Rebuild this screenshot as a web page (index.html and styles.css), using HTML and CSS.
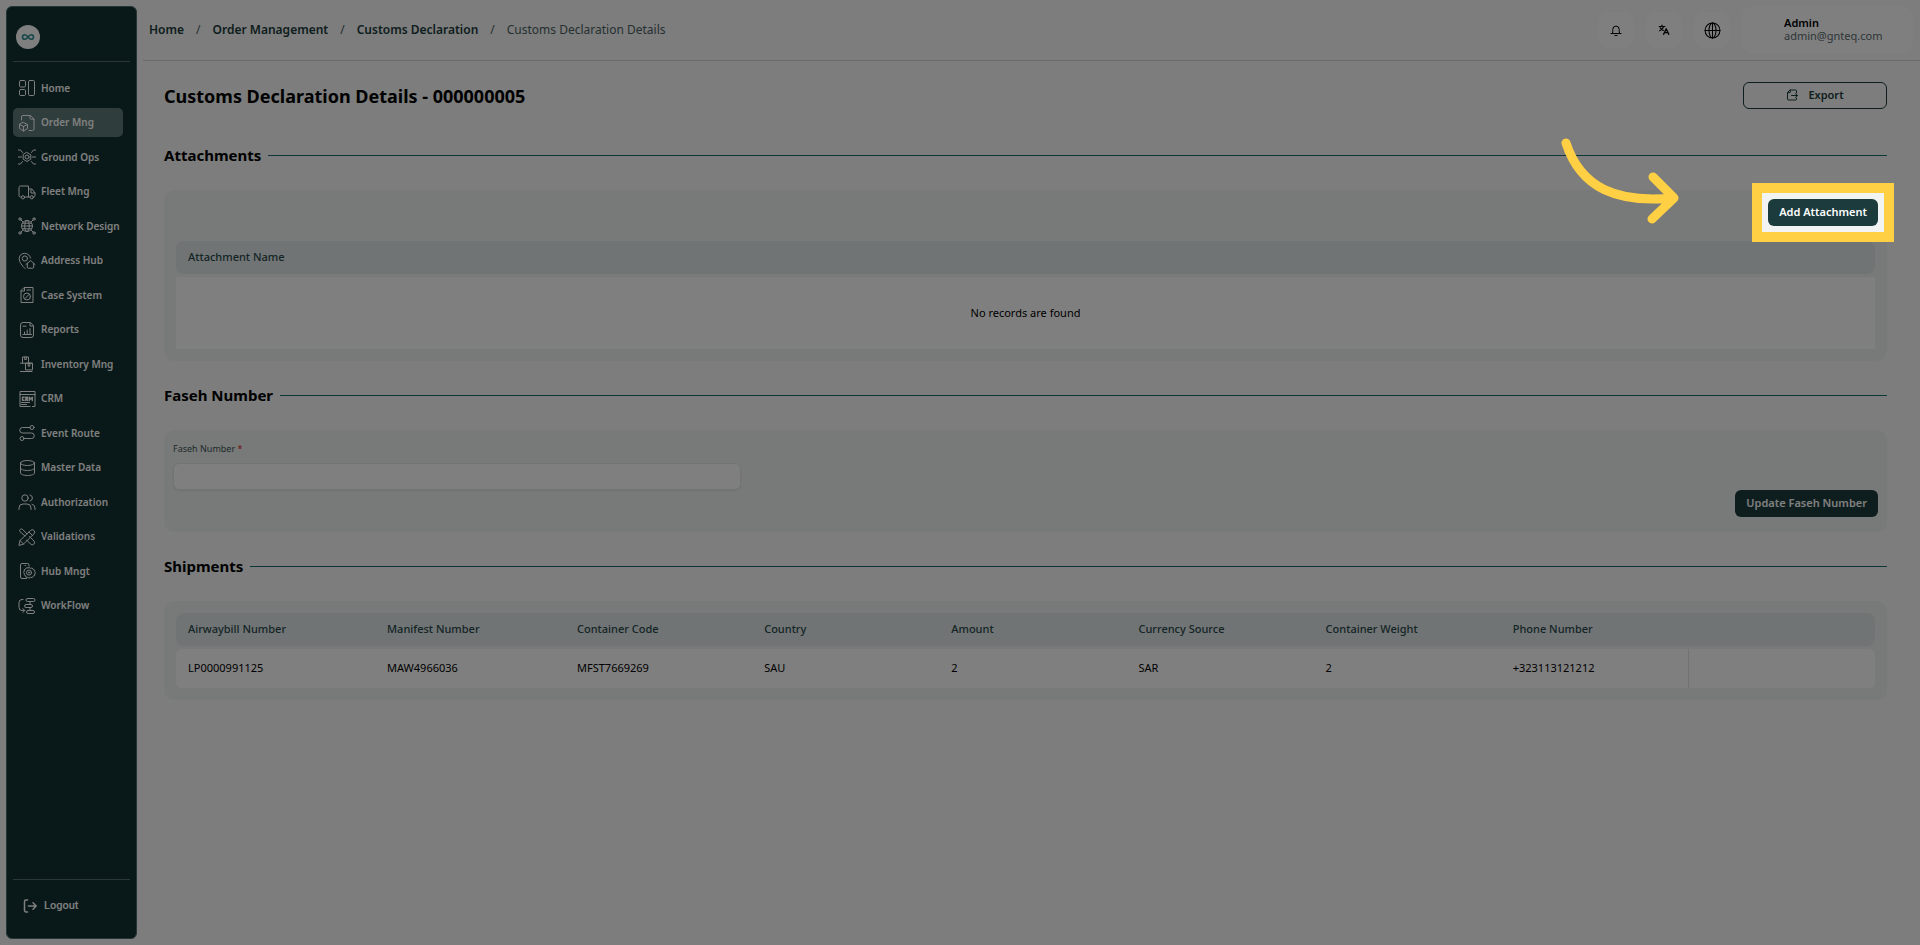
FILE: index.html
```html
<!DOCTYPE html>
<html lang="en">
<head>
    <meta charset="UTF-8">
    <meta name="viewport" content="width=device-width, initial-scale=1.0">
    <title>Customs Declaration Details</title>
    <link rel="stylesheet" href="styles.css">
</head>
<body>
    <aside class="sidebar">
        <div class="logo">
            <svg viewBox="0 0 24 24" aria-hidden="true">
                <path d="M12 12c-1.200-1.700-2-2.300-3.200-2.300a2.300 2.300 0 0 0 0 4.600c1.200 0 2-.6 3.200-2.300s2-2.300 3.200-2.300a2.300 2.300 0 0 1 0 4.600c-1.200 0-2-.6-3.200-2.300z"/>
            </svg>
        </div>

        <nav class="nav">
            <ul class="nav-list">
                <li><a class="nav-link" href="#">
                    <svg viewBox="0 0 18 18"><rect x="1.500" y="1.500" width="6" height="6.500" rx="1.200"/><rect x="1.500" y="10.500" width="6" height="6" rx="1.200"/><rect x="10.500" y="1.500" width="6" height="15" rx="1.200"/></svg>
                    <span>Home</span></a></li>
                <li><a class="nav-link active" href="#">
                    <svg viewBox="0 0 18 18"><path d="M3.500 6V3a1.500 1.500 0 0 1 1.500-1.500h7.500L16 5v10a1.500 1.500 0 0 1-1.500 1.500h-3.500M12 1.500V4a1.200 1.200 0 0 0 1.200 1.200H16"/><path d="M5.500 8.500 9.500 10.500v4l-4 2.500-4-2.500v-4zM1.500 10.500l4 2 4-2M5.500 12.500V17"/></svg>
                    <span>Order Mng</span></a></li>
                <li><a class="nav-link" href="#">
                    <svg viewBox="0 0 18 18"><path d="M9 4.500 12.800 6.800v4.400L9 13.500l-3.800-2.300V6.800z"/><circle cx="9" cy="9" r="2"/><path d="M0 9h3.500M14.500 9h3.500M.5 2h2l2 2.500M17.500 2h-2l-2 2.500M.5 16h2l2-2.500M17.500 16h-2l-2-2.500"/></svg>
                    <span>Ground Ops</span></a></li>
                <li><a class="nav-link" href="#">
                    <svg viewBox="0 0 18 18"><path d="M3 14H2.500a1.500 1.500 0 0 1-1.500-1.500v-8A1.500 1.500 0 0 1 2.500 3h8v11H6.500M10.500 6H14l3 4v2.500a1.500 1.500 0 0 1-1.500 1.500M12 14h-1.500M13 7v3h4"/><circle cx="5" cy="14.300" r="1.600"/><circle cx="13.800" cy="14.300" r="1.600"/></svg>
                    <span>Fleet Mng</span></a></li>
                <li><a class="nav-link" href="#">
                    <svg viewBox="0 0 18 18"><circle cx="9" cy="9" r="5.500"/><ellipse cx="9" cy="9" rx="2.300" ry="5.500"/><path d="M3.500 9h11M4.500 6.200h9M4.500 11.800h9M2.800 2.800l2 2M15.200 2.800l-2 2M2.800 15.200l2-2M15.200 15.200l-2-2"/><circle cx="2" cy="2" r="1.200"/><circle cx="16" cy="2" r="1.200"/><circle cx="2" cy="16" r="1.200"/><circle cx="16" cy="16" r="1.200"/></svg>
                    <span>Network Design</span></a></li>
                <li><a class="nav-link" href="#">
                    <svg viewBox="0 0 18 18"><path d="M7 16.500C4 13.500 1.200 10 1.200 6.700a5.700 5.700 0 0 1 11.300-.7"/><circle cx="6.900" cy="6.500" r="2.600"/><path d="M8 12.500 12.500 8.500 17 12.500M9.300 11.500v3.700a1 1 0 0 0 1 1h4.400a1 1 0 0 0 1-1v-3.700"/></svg>
                    <span>Address Hub</span></a></li>
                <li><a class="nav-link" href="#">
                    <svg viewBox="0 0 18 18"><path d="M6.500 1.500H15v15H3V5zM6.500 1.500V5H3M9 4h3.500"/><circle cx="9" cy="10.500" r="3.500"/><path d="m7 12.500 4-4"/></svg>
                    <span>Case System</span></a></li>
                <li><a class="nav-link" href="#">
                    <svg viewBox="0 0 18 18"><path d="M12 1.500H5A2.500 2.500 0 0 0 2.500 4v10A2.500 2.500 0 0 0 5 16.500h8a2.500 2.500 0 0 0 2.500-2.500V5zM12 1.500V5h3.500M5 5.200h3M5 13.500h8.500M6.500 13.500v-2.500M9.200 13.500V9M12 13.500V7.500"/></svg>
                    <span>Reports</span></a></li>
                <li><a class="nav-link" href="#">
                    <svg viewBox="0 0 18 18"><path d="M4.500 8V2h6v6M6.700 2v2.500h1.600V2M2.500 8.200h11.500M7.500 14.500V8.200h7v6.300zM10.200 8.200v3h1.600v-3M2.500 16.500h11.500"/></svg>
                    <span>Inventory Mng</span></a></li>
                <li><a class="nav-link" href="#">
                    <svg viewBox="0 0 18 18"><path d="M12 16.500H2v-15h15v15h-2.500M2 4.500h15M3.500 12.500h8M3.500 14.500h5"/><path class="thick" d="M6.200 7.200H4.500v3h1.700M7.800 10.500V7.200h1.700v1.600H8l1.600 1.700M11.300 10.500V7.200l1.500 2 1.500-2v3.300"/></svg>
                    <span>CRM</span></a></li>
                <li><a class="nav-link" href="#">
                    <svg viewBox="0 0 18 18"><circle cx="14" cy="3.500" r="2"/><circle cx="4" cy="14.500" r="2"/><path d="M12 3.500H4.500a2.700 2.700 0 0 0 0 5.500h9a2.700 2.700 0 0 1 0 5.500H6"/></svg>
                    <span>Event Route</span></a></li>
                <li><a class="nav-link" href="#">
                    <svg viewBox="0 0 18 18"><ellipse cx="9.500" cy="4" rx="7" ry="2.500"/><path d="M2.500 4v10c0 1.400 3.100 2.500 7 2.500s7-1.100 7-2.500V4M2.500 9c0 1.400 3.100 2.500 7 2.500s7-1.100 7-2.500"/></svg>
                    <span>Master Data</span></a></li>
                <li><a class="nav-link" href="#">
                    <svg viewBox="0 0 18 18"><circle cx="7" cy="5" r="3.200"/><path d="M1 16.500v-1.500a4 4 0 0 1 4-4h4a4 4 0 0 1 4 4v1.500M12 1.900a3.200 3.200 0 0 1 0 6.200M17 16.500v-1.500a4 4 0 0 0-3-3.800"/></svg>
                    <span>Authorization</span></a></li>
                <li><a class="nav-link" href="#">
                    <svg viewBox="0 0 18 18"><path d="m1 17 1-4.500L12.500 2.500a2.100 2.100 0 0 1 3.500 3.300L5.500 16zM11 4l3.500 3.500M2 12.500 5.500 16"/><path d="M7 8 1.800 3.500a1.800 1.800 0 0 1 2.700-2.200L9 6M11.500 8.500l4.500 4.500a2 2 0 0 1-3.500 3L8.500 12"/></svg>
                    <span>Validations</span></a></li>
                <li><a class="nav-link" href="#">
                    <svg viewBox="0 0 18 18"><path d="M8.500 16.500H4a1.500 1.500 0 0 1-1.500-1.500V3A1.500 1.500 0 0 1 4 1.500h5.500A1.500 1.500 0 0 1 11 3v1M7 3.500h.5"/><path d="m11 5.500 1.500.8 1.700-.3.900 1.400 1.600.7v1.700l.8 1-.8 1.200v1.500l-1.600.7-.9 1.400-1.700-.3-1.500.8-1.500-.8-1.300.1-.6-1.700-1.300-.7v-1.700l-.8-1 .8-1.200V7.600l1.500-.7.700-1.200 1.500.3z"/><circle cx="11" cy="10.600" r="2.500"/><circle cx="11" cy="10.600" r=".6"/></svg>
                    <span>Hub Mngt</span></a></li>
                <li><a class="nav-link" href="#">
                    <svg viewBox="0 0 18 18"><path d="M5 2.500H4A3 3 0 0 0 1 5.500v5a3 3 0 0 0 3 3h2.500M4.800 11.500l2 2-2 2"/><rect x="8" y="1.500" width="9" height="3" rx="1.500"/><rect x="6.500" y="7.500" width="8" height="3" rx="1.500"/><rect x="8.500" y="13.500" width="8" height="3" rx="1.500"/><path d="M12 4.500v3M12 10.500v3"/></svg>
                    <span>WorkFlow</span></a></li>
            </ul>
        </nav>

        <div class="sidebar-footer">
            <a class="logout" href="#">
                <svg viewBox="0 0 16 16"><path d="M5.500 2H4a1.500 1.500 0 0 0-1.500 1.500v9A1.500 1.500 0 0 0 4 14h1.500M6.500 8H14M11 4.800 14.200 8 11 11.200"/></svg>
                Logout
            </a>
        </div>
    </aside>

    <div class="content">
        <header class="topbar">
            <nav class="breadcrumb" aria-label="Breadcrumb">
                <a href="#">Home</a>
                <span>/</span>
                <a href="#">Order Management</a>
                <span>/</span>
                <a href="#">Customs Declaration</a>
                <span>/</span>
                <span>Customs Declaration Details</span>
            </nav>
            <div class="topbar-actions">
                <button class="icon-btn" type="button" aria-label="Notifications">
                    <svg viewBox="0 0 14 14"><path d="M2 10.500h10M3.300 10.500c.5-1 .5-2 .5-4.200a3.200 3.200 0 0 1 6.400 0c0 2.200 0 3.200.5 4.200M6 12.500h2"/></svg>
                </button>
                <button class="icon-btn" type="button" aria-label="Language">
                    <svg viewBox="0 0 16 16"><path class="thick" d="M2.500 4h6.500M5.700 2.500V4M7.700 4.200C7 6.300 5.200 7.800 3 8.800M3.800 5.500C4.700 7 6 8 7.200 8.500"/><path class="thick" d="m7.500 13 3-6.500 3 6.500M8.500 11h4"/></svg>
                </button>
                <button class="icon-btn" type="button" aria-label="Region">
                    <svg class="globe" viewBox="0 0 16 16"><circle cx="8" cy="8" r="7"/><ellipse cx="8" cy="8" rx="3.300" ry="7"/><path d="M1 8h14M8 1v14"/></svg>
                </button>
                <div class="user-card">
                    <strong>Admin</strong>
                    <span>admin@gnteq.com</span>
                </div>
            </div>
        </header>

        <main class="main">
            <div class="page-head">
                <h1>Customs Declaration Details - 000000005</h1>
                <button class="btn-outline" type="button">
                    <svg viewBox="0 0 12 12"><path d="M10.500 4V2a1 1 0 0 0-1-1H4L1.500 3.500V10a1 1 0 0 0 1 1h7a1 1 0 0 0 1-1V9M4.200 1v2.700H1.500M5.500 6.500h6M9.500 4.700l1.900 1.800-1.900 1.800"/></svg>
                    Export
                </button>
            </div>

            <h2 class="section-title">Attachments</h2>
            <section class="panel">
                <div class="panel-actions">
                    <div class="tour-target">
                        <button class="btn" type="button">Add Attachment</button>
                        <div class="tour-spotlight"></div>
                        <svg class="tour-arrow" viewBox="0 0 120 92" aria-hidden="true"><path d="M6 7C21 53 58 67 112 62M93 41l21 21-22 21"/></svg>
                    </div>
                </div>
                <table class="table">
                    <thead>
                        <tr><th>Attachment Name</th></tr>
                    </thead>
                    <tbody>
                        <tr><td class="empty">No records are found</td></tr>
                    </tbody>
                </table>
            </section>

            <h2 class="section-title">Faseh Number</h2>
            <section class="panel form-panel">
                <div class="field">
                    <label for="fasehNumber">Faseh Number <span>*</span></label>
                    <input id="fasehNumber" type="text">
                </div>
                <button class="btn" type="button">Update Faseh Number</button>
            </section>

            <h2 class="section-title">Shipments</h2>
            <section class="panel">
                <table class="table shipments">
                    <thead>
                        <tr>
                            <th class="col-airwaybill">Airwaybill Number</th>
                            <th class="col-manifest">Manifest Number</th>
                            <th>Container Code</th>
                            <th>Country</th>
                            <th>Amount</th>
                            <th>Currency Source</th>
                            <th>Container Weight</th>
                            <th>Phone Number</th>
                            <th></th>
                        </tr>
                    </thead>
                    <tbody>
                        <tr>
                            <td>LP0000991125</td>
                            <td>MAW4966036</td>
                            <td>MFST7669269</td>
                            <td>SAU</td>
                            <td>2</td>
                            <td>SAR</td>
                            <td>2</td>
                            <td>+323113121212</td>
                            <td class="row-actions"></td>
                        </tr>
                    </tbody>
                </table>
            </section>
        </main>
    </div>
</body>
</html>
```

FILE: styles.css
```css
* {
    box-sizing: border-box;
}

body {
    margin: 0;
    min-height: 100vh;
    display: flex;
    gap: 6px;
    background: #f8fbf9;
    color: #000;
    font-family: "Noto Sans", sans-serif;
    font-size: 11px;
}

a {
    color: inherit;
    text-decoration: none;
}

button {
    font: inherit;
    cursor: pointer;
}

svg {
    fill: none;
    stroke: currentColor;
    stroke-width: 1;
    stroke-linecap: round;
    stroke-linejoin: round;
    flex-shrink: 0;
}

.thick {
    stroke-width: 1.4;
}

/* Sidebar */
.sidebar {
    display: flex;
    flex-direction: column;
    width: 131px;
    flex-shrink: 0;
    margin: 6px 0 6px 6px;
    padding: 0 6px;
    background: #133332;
    border: 1px solid #4c6c6c;
    border-radius: 6px;
    color: #fff;
}

.logo {
    height: 55px;
    padding: 18px 3px 0;
    border-bottom: 1px solid #566f6f;
}

.logo svg {
    display: block;
    width: 24px;
    height: 24px;
    background: #fff;
    border-radius: 50%;
    stroke: #2f8f93;
    stroke-width: 1.6;
}

.nav {
    flex: 1;
    padding-top: 9px;
}

.nav-list {
    display: grid;
    grid-template-rows: repeat(8, 34px 35px);
    align-items: center;
    margin: 0;
    padding: 0;
    list-style: none;
}

.nav-link {
    display: flex;
    align-items: center;
    gap: 5px;
    width: 110px;
    height: 29px;
    padding-left: 5px;
    border-radius: 5px;
    font-size: 10px;
    font-weight: 600;
    white-space: nowrap;
}

.nav-link span {
    padding-bottom: 1px;
}

.nav-link svg {
    width: 18px;
    height: 18px;
}

.nav-link.active {
    background: #617b7b;
}

.sidebar-footer {
    height: 59px;
    padding: 18px 9px;
    border-top: 1px solid #566f6f;
}

.logout {
    display: flex;
    align-items: center;
    gap: 6px;
    font-family: Roboto, sans-serif;
    font-weight: 500;
    line-height: 16px;
}

.logout svg {
    width: 16px;
    height: 16px;
    stroke-width: 1.5;
}

/* Top bar */
.content {
    flex: 1;
    min-width: 0;
}

.topbar {
    display: flex;
    align-items: center;
    justify-content: space-between;
    height: 61px;
    padding: 0 7px 0 6px;
    border-bottom: 1px solid #d4d8d7;
}

.breadcrumb {
    display: flex;
    gap: 12px;
    padding-bottom: 2px;
    font-size: 12px;
    color: #4d5f63;
}

.breadcrumb a {
    color: #1c3b3c;
    font-weight: 600;
}

.topbar-actions {
    display: flex;
    align-items: center;
    gap: 12px;
}

.icon-btn {
    display: flex;
    align-items: center;
    justify-content: center;
    width: 36px;
    height: 36px;
    padding: 0;
    border: 0;
    border-radius: 10px;
    background: #fff;
    color: #000;
}

.icon-btn svg {
    width: 14px;
    height: 14px;
}

.icon-btn .globe {
    width: 17px;
    height: 17px;
}

.user-card {
    display: flex;
    flex-direction: column;
    justify-content: center;
    width: 171px;
    height: 48px;
    padding: 0 0 2px 42px;
    border-radius: 12px;
    background: #fff;
    line-height: 13px;
}

.user-card strong {
    font-weight: 600;
}

.user-card span {
    color: #5c6c6f;
}

/* Page */
.main {
    padding: 21px 33px 21px 21px;
}

.page-head {
    display: flex;
    align-items: center;
    justify-content: space-between;
    height: 27px;
    margin-bottom: 34px;
}

h1 {
    margin: 0;
    font-size: 18px;
    font-weight: 700;
}

.btn-outline {
    display: flex;
    align-items: center;
    justify-content: center;
    gap: 10px;
    width: 144px;
    height: 27px;
    padding: 0 0 2px;
    border: 1px solid #1c3b3c;
    border-radius: 6px;
    background: none;
    color: #1c3b3c;
    font-weight: 600;
}

.btn-outline svg {
    width: 12px;
    height: 12px;
}

.section-title {
    display: flex;
    align-items: center;
    gap: 7px;
    margin: 0 0 23px;
    font-size: 15px;
    font-weight: 700;
    line-height: 24px;
}

.section-title::after {
    content: "";
    flex: 1;
    height: 1px;
    background: #1d6b73;
}

.panel {
    margin-bottom: 22px;
    padding: 12px;
    border-radius: 10px;
    background: #f1f4f2;
}

.panel-actions {
    display: flex;
    justify-content: flex-end;
    margin: -3px -3px 15px;
}

.btn {
    height: 27px;
    padding: 0 11px 2px;
    border: 0;
    border-radius: 6px;
    background: #1c3b3c;
    color: #fff;
    font-weight: 600;
    white-space: nowrap;
}

.table {
    width: 100%;
    border-spacing: 0;
    line-height: 15px;
}

.table th {
    height: 33px;
    padding: 0 12px 2px;
    background: #e1e8ea;
    color: #2b4a4c;
    font-weight: 500;
    text-align: left;
}

.table th:first-child {
    border-radius: 8px 0 0 8px;
}

.table th:last-child {
    border-radius: 0 8px 8px 0;
}

.table th:only-child {
    border-radius: 8px;
}

/* spacer between head and body rows */
.table tbody::before {
    content: "";
    display: block;
    height: 3px;
}

.table td {
    height: 39px;
    padding: 0 12px 2px;
    background: #fff;
}

.table .empty {
    height: 72px;
    text-align: center;
}

.shipments {
    table-layout: fixed;
}

.shipments .col-airwaybill {
    width: 199px;
}

.shipments .col-manifest {
    width: 190px;
}

.shipments td:first-child {
    border-radius: 6px 0 0 6px;
}

.shipments td:last-child {
    border-radius: 0 6px 6px 0;
}

.shipments .row-actions {
    border-left: 1px solid #dfe6e5;
}

.form-panel {
    display: flex;
    align-items: flex-end;
    justify-content: space-between;
    padding: 12px 9px 15px;
}

.field {
    width: calc(100% / 3);
    height: 75px;
}

.field label {
    display: block;
    margin-bottom: 7px;
    color: #3c5658;
    font-size: 9px;
    line-height: 14px;
}

.field label span {
    color: #e02020;
}

.field input {
    width: 100%;
    height: 27px;
    padding: 0 8px;
    border: 1px solid #e3e8e7;
    border-radius: 6px;
    background: #fff;
    box-shadow: 0 1px 2px rgba(0, 0, 0, 0.08);
    font: inherit;
}

/* Guided tour: dims the page around the highlighted button */
.tour-target {
    position: relative;
}

.tour-spotlight {
    position: absolute;
    inset: -16px;
    z-index: 10;
    border: 10px solid #ffd043;
    box-shadow: 0 0 0 4000px rgba(0, 0, 0, 0.5);
    pointer-events: none;
}

.tour-arrow {
    position: absolute;
    top: -63px;
    right: calc(100% + 88px);
    z-index: 11;
    width: 120px;
    height: 92px;
    stroke: #ffd043;
    stroke-width: 9;
    pointer-events: none;
}
```
